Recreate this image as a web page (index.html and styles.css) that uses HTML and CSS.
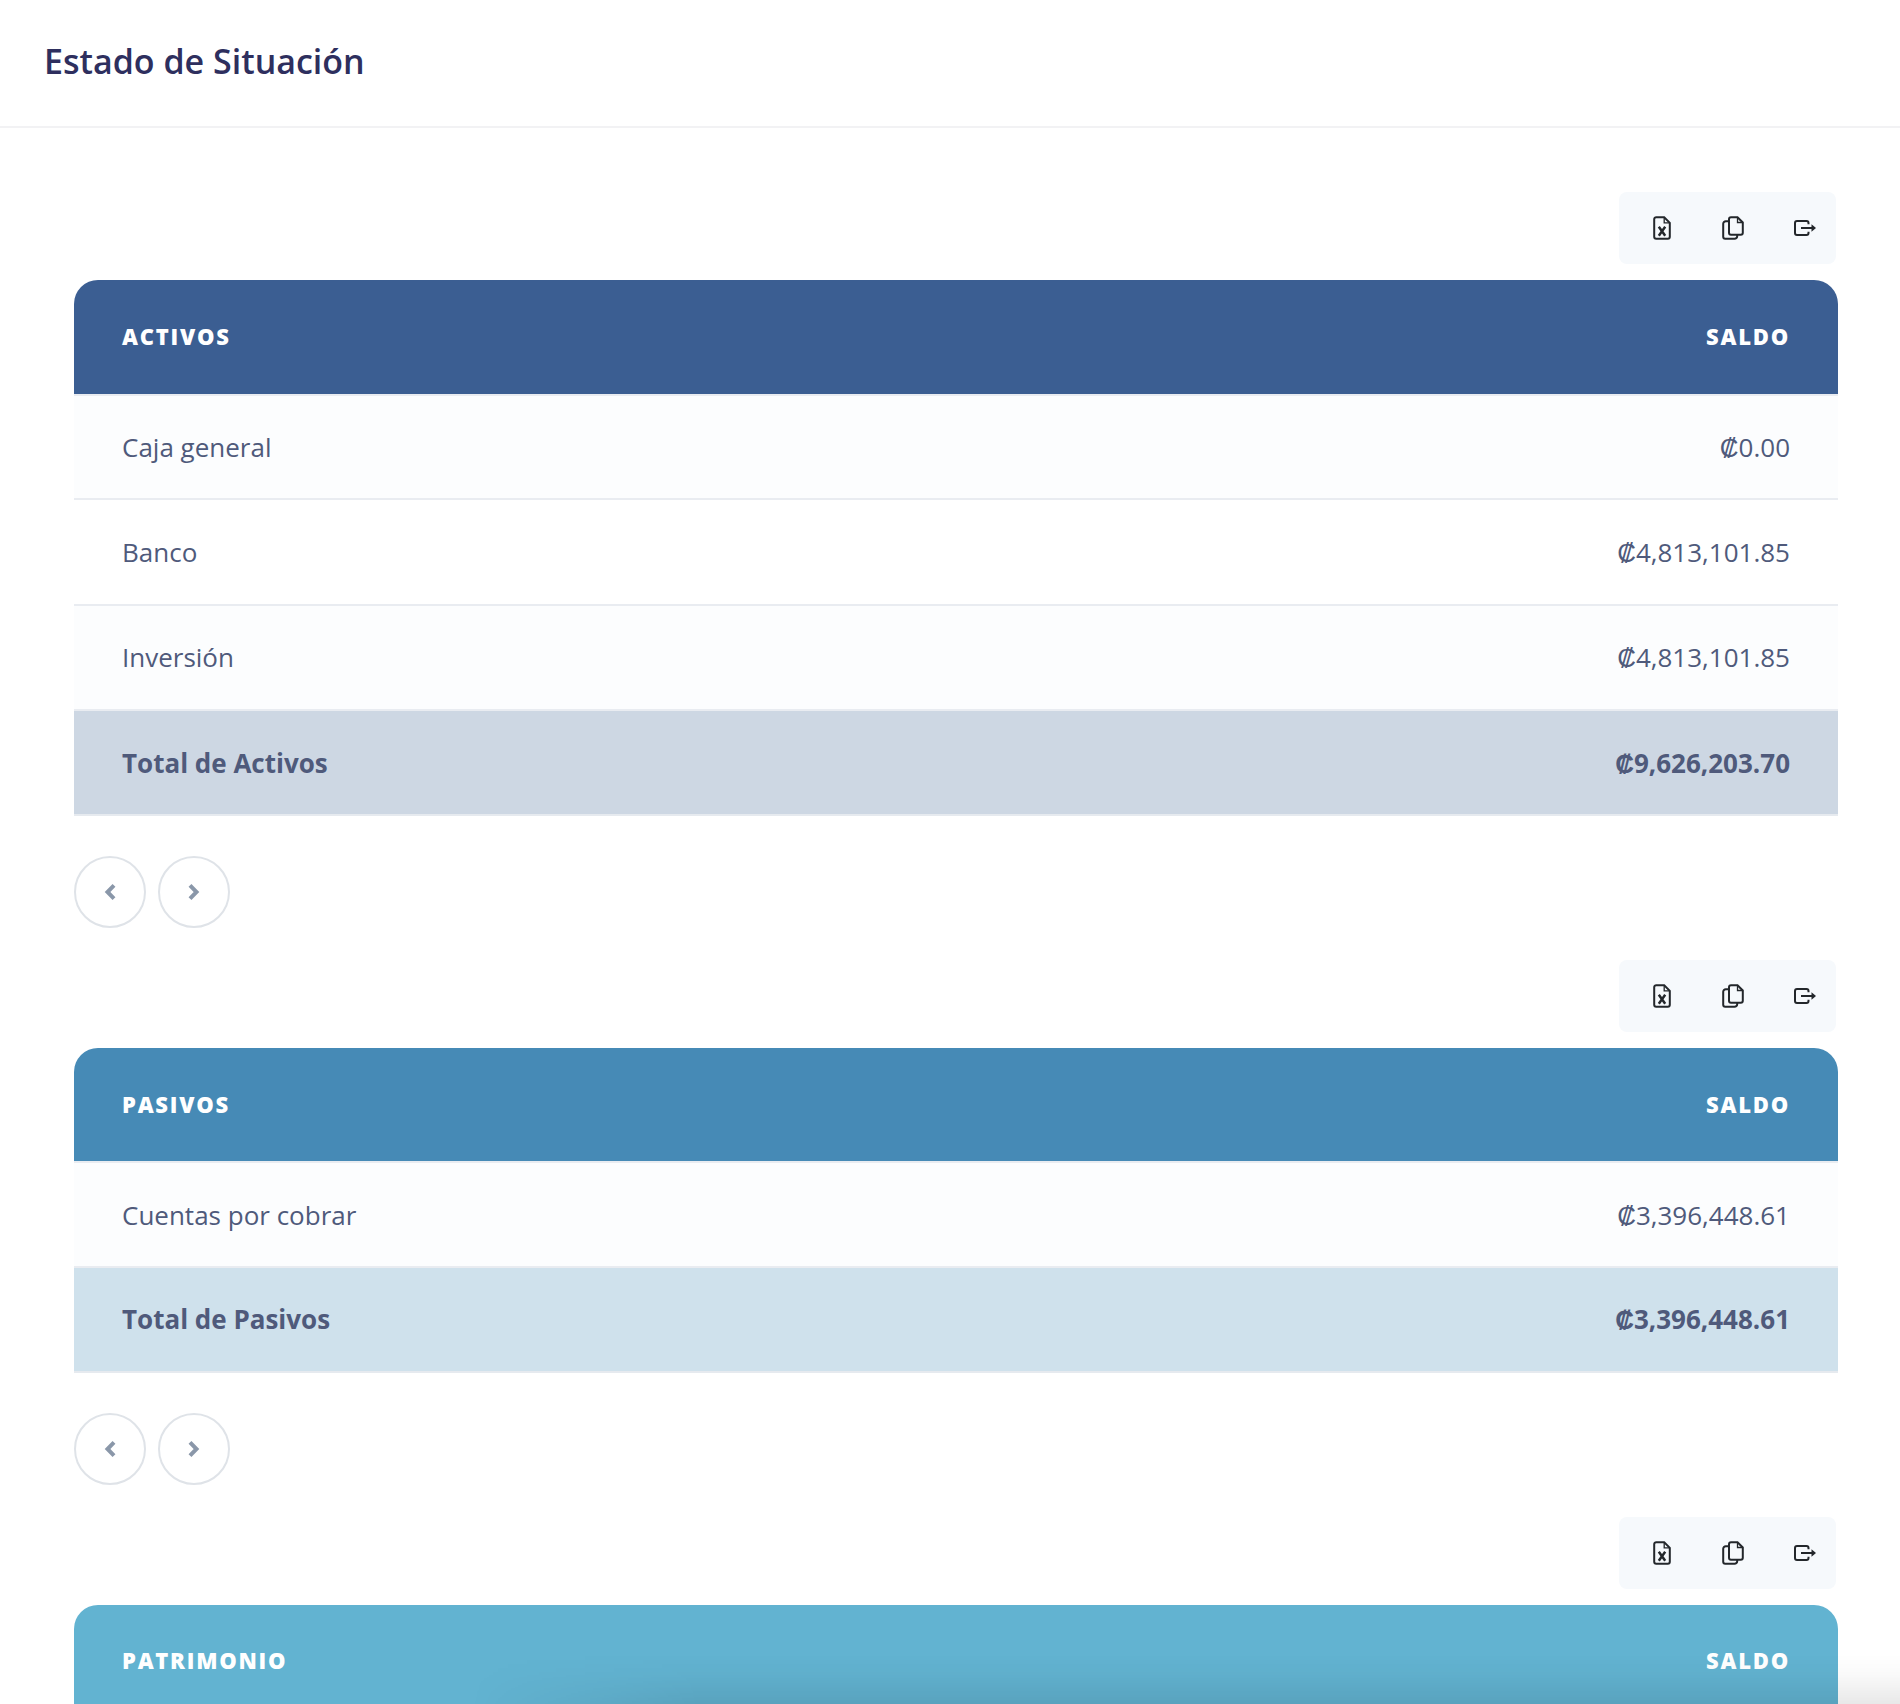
FILE: index.html
```html
<!DOCTYPE html>
<html lang="es">
<head>
<meta charset="utf-8">
<title>Estado de Situación</title>
<link rel="stylesheet" href="styles.css">
</head>
<body>
<svg class="sprite" width="0" height="0" aria-hidden="true">
  <symbol id="i-excel" viewBox="0 0 18 24">
    <path d="M1.200 3.200a2 2 0 0 1 2-2h8l5.600 5.600v14a2 2 0 0 1-2 2h-11.600a2 2 0 0 1-2-2z" fill="none" stroke="currentColor" stroke-width="2"/>
    <path d="M11.200 1.200v5.600h5.600" fill="none" stroke="currentColor" stroke-width="1.300"/>
    <path d="M5.800 10.800l6.400 9M12.200 10.800l-6.400 9" fill="none" stroke="currentColor" stroke-width="2.500"/>
  </symbol>
  <symbol id="i-copy" viewBox="0 0 22 24">
    <path d="M7 5.200H3.800a2.600 2.600 0 0 0-2.600 2.600v13a2 2 0 0 0 2 2h9.400a2.600 2.600 0 0 0 2.600-2.600v-1.400" fill="none" stroke="currentColor" stroke-width="2"/>
    <path d="M7 3.200a2 2 0 0 1 2-2h6.500l5.300 5.300v10.300a2 2 0 0 1-2 2H9a2 2 0 0 1-2-2z" fill="none" stroke="currentColor" stroke-width="2"/>
    <path d="M15.500 1.200v5.300h5.300" fill="none" stroke="currentColor" stroke-width="1.300"/>
  </symbol>
  <symbol id="i-export" viewBox="0 0 22 16">
    <path d="M14.500 4.200V3a2 2 0 0 0-2-2H3a2 2 0 0 0-2 2v10a2 2 0 0 0 2 2h9.500a2 2 0 0 0 2-2v-1.200" fill="none" stroke="currentColor" stroke-width="2"/>
    <path d="M7 8h11.500" fill="none" stroke="currentColor" stroke-width="2"/>
    <path d="M17.500 4.300L22 8l-4.500 3.700z" fill="currentColor"/>
  </symbol>
  <symbol id="i-left" viewBox="0 0 12 18">
    <path d="M10 2.300L3.500 9l6.500 6.700" fill="none" stroke="currentColor" stroke-width="4"/>
  </symbol>
  <symbol id="i-right" viewBox="0 0 12 18">
    <path d="M2 2.300L8.500 9 2 15.700" fill="none" stroke="currentColor" stroke-width="4"/>
  </symbol>
</svg>

<header class="page-head">
  <h1 class="page-title">Estado de Situación</h1>
</header>

<main class="content">
  <section class="report">
    <div class="toolbar-row">
      <div class="toolbar">
        <svg class="icon icon-excel"><use href="#i-excel"/></svg>
        <svg class="icon icon-copy"><use href="#i-copy"/></svg>
        <svg class="icon icon-export"><use href="#i-export"/></svg>
      </div>
    </div>
    <div class="table">
      <div class="row head head-activos"><span>ACTIVOS</span><span>SALDO</span></div>
      <div class="row item"><span>Caja general</span><span><span class="cur">₡</span>0.00</span></div>
      <div class="row item alt"><span>Banco</span><span><span class="cur">₡</span>4,813,101.85</span></div>
      <div class="row item"><span>Inversión</span><span><span class="cur">₡</span>4,813,101.85</span></div>
      <div class="row total total-activos"><span>Total de Activos</span><span><span class="cur">₡</span>9,626,203.70</span></div>
    </div>
    <div class="pager">
      <button class="page-btn" type="button"><svg class="chev"><use href="#i-left"/></svg></button>
      <button class="page-btn" type="button"><svg class="chev"><use href="#i-right"/></svg></button>
    </div>
  </section>

  <section class="report">
    <div class="toolbar-row">
      <div class="toolbar">
        <svg class="icon icon-excel"><use href="#i-excel"/></svg>
        <svg class="icon icon-copy"><use href="#i-copy"/></svg>
        <svg class="icon icon-export"><use href="#i-export"/></svg>
      </div>
    </div>
    <div class="table">
      <div class="row head head-pasivos"><span>PASIVOS</span><span>SALDO</span></div>
      <div class="row item"><span>Cuentas por cobrar</span><span><span class="cur">₡</span>3,396,448.61</span></div>
      <div class="row total total-pasivos"><span>Total de Pasivos</span><span><span class="cur">₡</span>3,396,448.61</span></div>
    </div>
    <div class="pager">
      <button class="page-btn" type="button"><svg class="chev"><use href="#i-left"/></svg></button>
      <button class="page-btn" type="button"><svg class="chev"><use href="#i-right"/></svg></button>
    </div>
  </section>

  <section class="report">
    <div class="toolbar-row">
      <div class="toolbar">
        <svg class="icon icon-excel"><use href="#i-excel"/></svg>
        <svg class="icon icon-copy"><use href="#i-copy"/></svg>
        <svg class="icon icon-export"><use href="#i-export"/></svg>
      </div>
    </div>
    <div class="table">
      <div class="row head head-patrimonio"><span>PATRIMONIO</span><span>SALDO</span></div>
    </div>
  </section>
</main>
<div class="edge-shadow"></div>
</body>
</html>
```

FILE: styles.css
```css
* { box-sizing: border-box; }
html, body { height: 1704px; overflow: hidden; }
body {
  margin: 0;
  background: #fff;
  font-family: "Open Sans", "Noto Sans", sans-serif;
  color: #4f5a7b;
  position: relative;
}
.sprite { position: absolute; }
.page-head {
  height: 128px;
  padding: 0 44px;
  display: flex;
  align-items: center;
  border-bottom: 2px solid #f2f2f4;
}
.page-title {
  margin: 0 0 4px;
  font-size: 34px;
  font-weight: 600;
  color: #2e2f5e;
}
.content { padding: 64px 62px 0 74px; }
.report { display: flex; flex-direction: column; }
.toolbar-row { display: flex; justify-content: flex-end; padding-right: 2px; margin-bottom: 16px; }
.toolbar {
  width: 217px;
  height: 72px;
  background: #f6f9fc;
  border-radius: 8px;
  position: relative;
}
.icon { position: absolute; color: #23272b; }
.icon-excel { left: 34px; top: 24px; width: 18px; height: 24px; }
.icon-copy { left: 103px; top: 24px; width: 22px; height: 24px; }
.icon-export { left: 175px; top: 28px; width: 22px; height: 16px; }
.table { display: flex; flex-direction: column; }
.row {
  display: flex;
  justify-content: space-between;
  align-items: center;
  padding: 0 48px;
  font-size: 26px;
}
.head {
  height: 113.5px;
  padding-bottom: 2px;
  border-radius: 24px 24px 0 0;
  color: #fff;
  font-size: 22px;
  font-weight: 800;
  letter-spacing: 1.75px;
}
.head-activos { background: #3b5e92; }
.head-pasivos { background: #468ab6; }
.head-patrimonio { background: #62b3d1; }
.item { height: 105.6px; background: #fcfdfe; border-bottom: 2px solid #e9ecf1; }
.item.alt { background: #fff; }
.head + .item {
  height: 106.6px;
  padding-top: 2px;
  box-shadow: inset 0 2px 0 #e9ecf1;
}
.total {
  height: 104.6px;
  font-weight: 700;
  border-bottom: 2px solid #e6eaef;
}
.total-activos { background: #cdd7e3; }
.total-pasivos { background: #cfe1ec; }
.cur { font-family: "Liberation Sans", sans-serif; line-height: 1; }
.pager { display: flex; gap: 12px; margin: 40px 0 32px; }
.page-btn {
  width: 72px;
  height: 72px;
  padding: 0;
  border: 2px solid #dfe3e8;
  border-radius: 50%;
  background: #fff;
  display: flex;
  align-items: center;
  justify-content: center;
}
.chev { width: 12px; height: 18px; color: #8a97a9; }
.edge-shadow {
  position: absolute;
  left: 0;
  right: 0;
  bottom: 0;
  height: 50px;
  pointer-events: none;
  background: linear-gradient(to bottom, rgba(0, 0, 0, 0), rgba(0, 0, 0, 0.02) 40%, rgba(0, 0, 0, 0.09));
  -webkit-mask-image: linear-gradient(to right, transparent 470px, #000 700px);
  mask-image: linear-gradient(to right, transparent 470px, #000 700px);
}
```
